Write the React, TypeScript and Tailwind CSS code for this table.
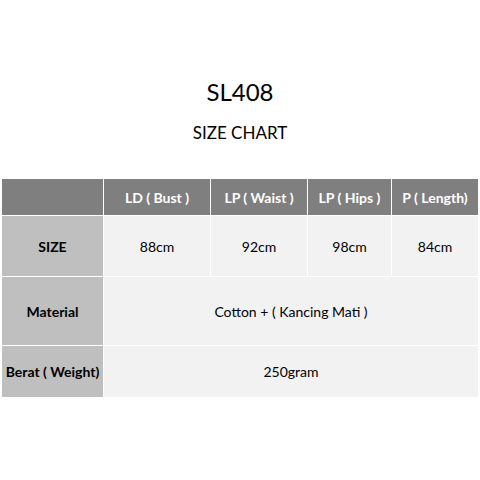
export default function App() {
  const headers = ["LD ( Bust )", "LP ( Waist )", "LP ( Hips )", "P ( Length)"];
  const sizes = ["88cm", "92cm", "98cm", "84cm"];
  return (
    <div
      className="w-[480px] h-[480px] bg-white text-black"
      style={{ fontFamily: "Lato, 'Open Sans', sans-serif" }}
    >
      <div className="pt-[77px] flex flex-col items-center">
        <h1 className="text-[24px] leading-[30px]">SL408</h1>
        <h2 className="mt-[15px] text-[17px] leading-[22px]">SIZE CHART</h2>
      </div>
      <div className="mt-[35px] ml-[2px] w-[476px] grid grid-cols-[101px_106px_96px_83px_86px] grid-rows-[36px_60px_68px_51px] gap-[1px] text-[14px]">
        <div className="bg-[#7f7f7f]" />
        {headers.map((h) => (
          <div key={h} className="bg-[#7f7f7f] text-white font-bold flex items-center justify-center">
            {h}
          </div>
        ))}
        <div className="bg-[#bfbfbf] font-bold flex items-center justify-center">SIZE</div>
        {sizes.map((s) => (
          <div key={s} className="bg-[#f2f2f2] flex items-center justify-center">
            {s}
          </div>
        ))}
        <div className="bg-[#bfbfbf] font-bold flex items-center justify-center">Material</div>
        <div className="col-span-4 bg-[#f2f2f2] flex items-center justify-center">
          Cotton + ( Kancing Mati )
        </div>
        <div className="bg-[#bfbfbf] font-bold flex items-center justify-center">Berat ( Weight)</div>
        <div className="col-span-4 bg-[#f2f2f2] flex items-center justify-center">250gram</div>
      </div>
    </div>
  );
}
